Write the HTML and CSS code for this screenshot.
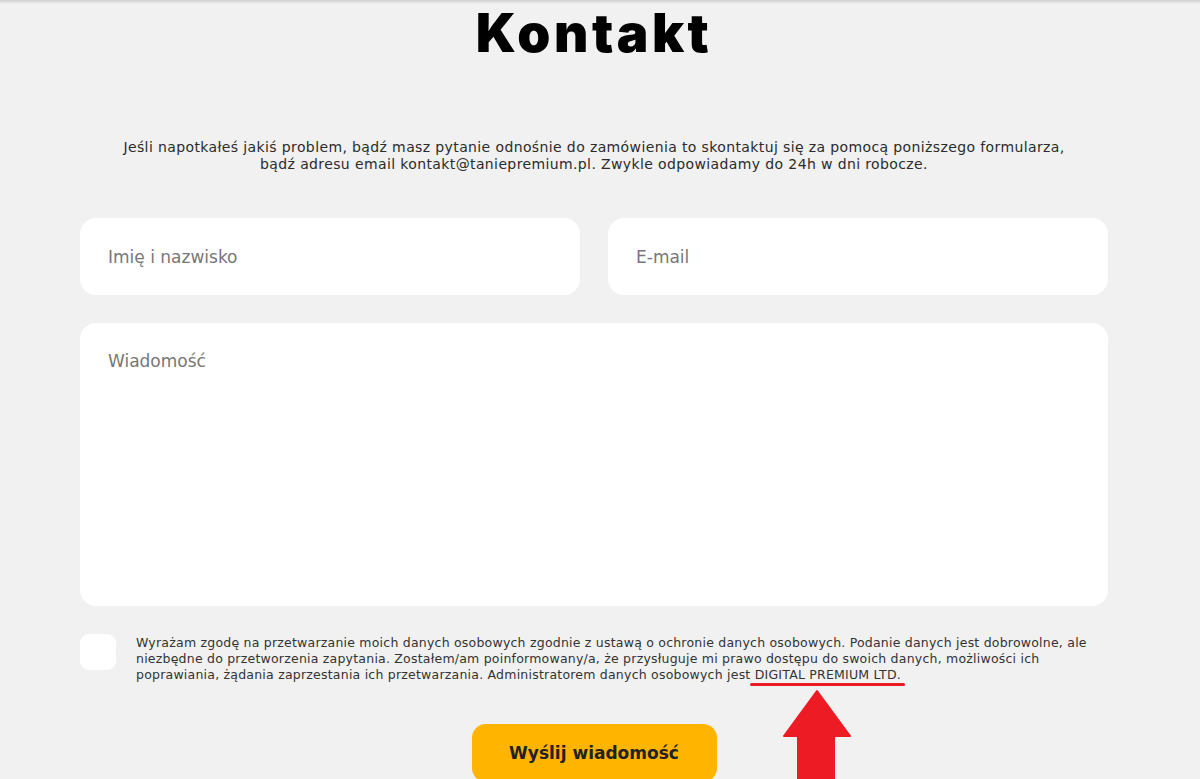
FILE: index.html
```html
<!DOCTYPE html>
<html lang="pl">
<head>
<meta charset="utf-8">
<title>Kontakt</title>
<link rel="stylesheet" href="styles.css">
</head>
<body>
<div class="topshadow"></div>
<main class="page">
  <h1 class="title">Kontakt</h1>
  <p class="intro">Jeśli napotkałeś jakiś problem, bądź masz pytanie odnośnie do zamówienia to skontaktuj się za pomocą poniższego formularza,<br>bądź adresu email kontakt@taniepremium.pl. Zwykle odpowiadamy do 24h w dni robocze.</p>
  <form class="form">
    <div class="row">
      <div class="field">Imię i nazwisko</div>
      <div class="field">E-mail</div>
    </div>
    <div class="field area">Wiadomość</div>
    <div class="consent">
      <div class="check"></div>
      <p class="consent-text">Wyrażam zgodę na przetwarzanie moich danych osobowych zgodnie z ustawą o ochronie danych osobowych. Podanie danych jest dobrowolne, ale niezbędne do przetworzenia zapytania. Zostałem/am poinformowany/a, że przysługuje mi prawo dostępu do swoich danych, możliwości ich poprawiania, żądania zaprzestania ich przetwarzania. Administratorem danych osobowych jest <span class="mark">DIGITAL PREMIUM LTD.</span></p>
    </div>
    <div class="actions"><button type="button" class="btn">Wyślij wiadomość</button></div>
  </form>
</main>
<svg class="arrow" width="70" height="92" viewBox="0 0 70 92"><path d="M35 2 L68 47 L52 47 L52 92 L16 92 L16 47 L2 47 Z" fill="#ed1c24" stroke="#ed1c24" stroke-width="2" stroke-linejoin="round"/></svg>
</body>
</html>
```
FILE: styles.css
```css
html, body { margin: 0; padding: 0; }
body {
  background: #f1f1f1;
  font-family: "DejaVu Sans", "Open Sans", sans-serif;
  color: #333;
  height: 779px;
  overflow: hidden;
  position: relative;
}
.topshadow {
  position: absolute; left: 0; right: 0; top: 0; height: 4px;
  background: linear-gradient(#cfcfcf, rgba(241,241,241,0));
}
.page {
  width: 1028px;
  margin-left: 80px;
  display: flex;
  flex-direction: column;
}
.title {
  margin: 0;
  padding-top: 3px;
  text-align: center;
  font-family: "Inter", sans-serif;
  font-weight: 900;
  font-size: 53px;
  line-height: 60px;
  color: #000;
  letter-spacing: 3.5px;
}
.intro {
  margin: 76px -40px 0;
  text-align: center;
  font-size: 14px;
  line-height: 17px;
  letter-spacing: 0.38px;
  color: #2b2b2b;
}
.form { margin-top: 45px; display: flex; flex-direction: column; }
.row { display: flex; gap: 28px; }
.field {
  flex: 1;
  background: #fff;
  border-radius: 16px;
  height: 77px;
  box-sizing: border-box;
  padding: 28px 28px 0;
  font-size: 17px;
  line-height: 22px;
  color: #777;
}
.area { margin-top: 28px; height: 283px; padding-top: 27px; flex: none; }
.consent { display: flex; align-items: flex-start; margin-top: 28px; }
.check {
  width: 36px; height: 36px; flex: none;
  background: #fff; border-radius: 9px; margin-top: 0;
}
.consent-text {
  margin: 1px 0 0 20px;
  font-size: 12.5px;
  line-height: 16px;
  letter-spacing: 0.22px;
  color: #333;
}
.mark {
  position: relative;
}
.mark::after {
  content: "";
  position: absolute; left: -5px; right: -4px; bottom: -4px; height: 3px;
  background: #ed1c24; border-radius: 2px;
}
.actions { display: flex; justify-content: center; margin-top: 41px; }
.btn {
  width: 245px; height: 58px;
  border: 0; border-radius: 14px;
  background: #ffb400;
  font-family: "DejaVu Sans", sans-serif;
  font-weight: bold; font-size: 17px;
  color: #222;
}
.arrow { position: absolute; left: 782px; top: 689px; }
```
